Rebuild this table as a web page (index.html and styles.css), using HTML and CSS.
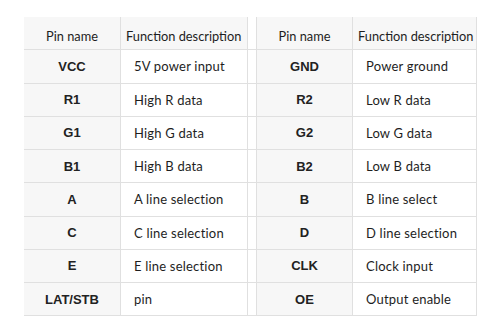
FILE: index.html
```html
<!DOCTYPE html>
<html lang="en">
<head>
    <meta charset="UTF-8">
    <title>Pin Definitions</title>
    <link rel="stylesheet" href="styles.css">
</head>
<body>
    <div class="pin-grid">
        <div class="cell head pin">Pin name</div>
        <div class="cell head desc">Function description</div>
        <div class="cell gap"></div>
        <div class="cell head pin">Pin name</div>
        <div class="cell head desc">Function description</div>

        <div class="cell pin">VCC</div>
        <div class="cell desc">5V power input</div>
        <div class="cell gap"></div>
        <div class="cell pin">GND</div>
        <div class="cell desc">Power ground</div>

        <div class="cell pin">R1</div>
        <div class="cell desc">High R data</div>
        <div class="cell gap"></div>
        <div class="cell pin">R2</div>
        <div class="cell desc">Low R data</div>

        <div class="cell pin">G1</div>
        <div class="cell desc">High G data</div>
        <div class="cell gap"></div>
        <div class="cell pin">G2</div>
        <div class="cell desc">Low G data</div>

        <div class="cell pin">B1</div>
        <div class="cell desc">High B data</div>
        <div class="cell gap"></div>
        <div class="cell pin">B2</div>
        <div class="cell desc">Low B data</div>

        <div class="cell pin">A</div>
        <div class="cell desc">A line selection</div>
        <div class="cell gap"></div>
        <div class="cell pin">B</div>
        <div class="cell desc">B line select</div>

        <div class="cell pin">C</div>
        <div class="cell desc">C line selection</div>
        <div class="cell gap"></div>
        <div class="cell pin">D</div>
        <div class="cell desc">D line selection</div>

        <div class="cell pin">E</div>
        <div class="cell desc">E line selection</div>
        <div class="cell gap"></div>
        <div class="cell pin">CLK</div>
        <div class="cell desc">Clock input</div>

        <div class="cell pin">LAT/STB</div>
        <div class="cell desc">pin</div>
        <div class="cell gap"></div>
        <div class="cell pin">OE</div>
        <div class="cell desc">Output enable</div>
    </div>
</body>
</html>
```

FILE: styles.css
```css
body {
    margin: 0;
    background-color: white;
    font-family: Lato, "Open Sans", sans-serif;
    color: #1e1e1e;
}
.pin-grid {
    display: grid;
    grid-template-columns: 97px 127px 9px 96px 124px;
    grid-auto-rows: 33.25px;
    padding: 17px 24px 0;
}
.cell {
    box-sizing: border-box;
    display: flex;
    align-items: center;
    border-bottom: 1px solid #e0e0e0;
    border-right: 1px solid #e0e0e0;
    font-size: 13px;
    white-space: nowrap;
    letter-spacing: 0.2px;
}
.pin {
    justify-content: center;
    background-color: #f7f7f7;
    font-family: "Liberation Sans", Arial, sans-serif;
    font-weight: bold;
    font-size: 13px;
    letter-spacing: 0;
    color: #222;
}
.desc {
    padding-left: 13px;
}
.head {
    padding-top: 6px;
    background-color: #f7f7f7;
    font-family: Lato, "Open Sans", sans-serif;
    font-weight: normal;
    font-size: 12.8px;
    letter-spacing: 0;
    color: #1e1e1e;
}
.head.desc {
    padding-left: 5px;
}
.gap {
    background-color: white;
}
```
